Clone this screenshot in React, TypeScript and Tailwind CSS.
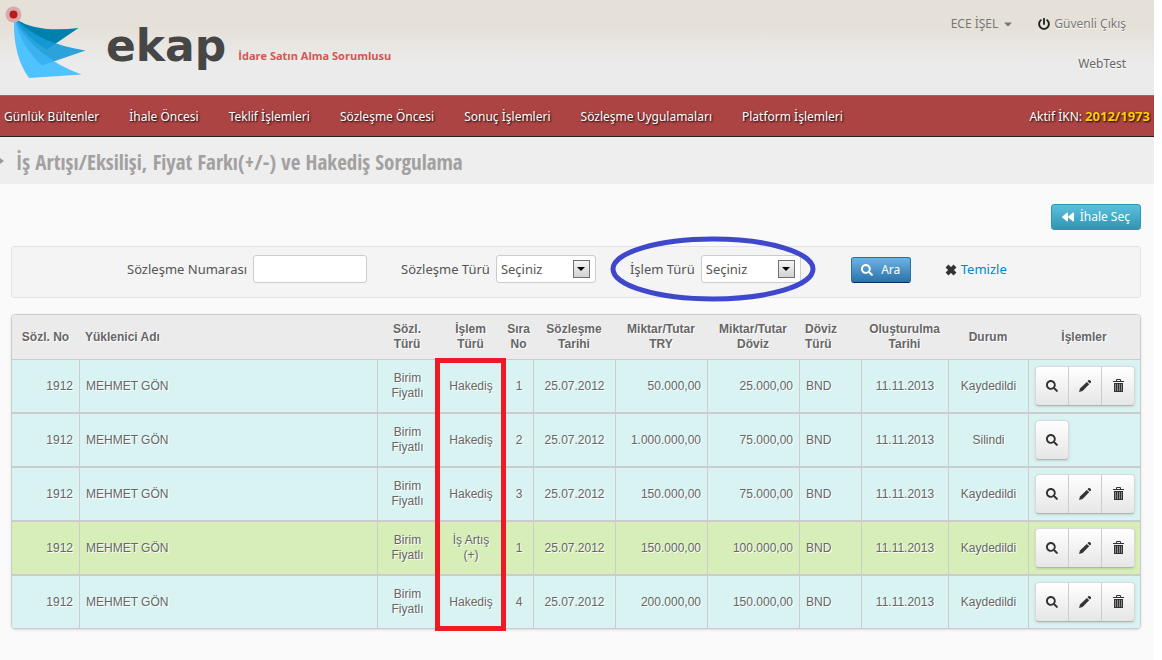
import React from 'react'
import { FaBackward, FaCaretDown, FaPowerOff, FaSearch } from 'react-icons/fa'

type Row = {
  no: string
  name: string
  kind: string
  op: string
  seq: number
  date: string
  amountTry: string
  amountFx: string
  currency: string
  created: string
  status: string
  highlighted?: boolean
  readOnly?: boolean
}

const base = {
  no: '1912',
  name: 'MEHMET GÖN',
  kind: 'Birim Fiyatlı',
  op: 'Hakediş',
  date: '25.07.2012',
  currency: 'BND',
  created: '11.11.2013',
  status: 'Kaydedildi',
}

const rows: Row[] = [
  { ...base, seq: 1, amountTry: '50.000,00', amountFx: '25.000,00' },
  { ...base, seq: 2, amountTry: '1.000.000,00', amountFx: '75.000,00', status: 'Silindi', readOnly: true },
  { ...base, seq: 3, amountTry: '150.000,00', amountFx: '75.000,00' },
  { ...base, seq: 1, amountTry: '150.000,00', amountFx: '100.000,00', op: 'İş Artış (+)', highlighted: true },
  { ...base, seq: 4, amountTry: '200.000,00', amountFx: '150.000,00' },
]

const menu = [
  'Günlük Bültenler',
  'İhale Öncesi',
  'Teklif İşlemleri',
  'Sözleşme Öncesi',
  'Sonuç İşlemleri',
  'Sözleşme Uygulamaları',
  'Platform İşlemleri',
]

function Logo() {
  return (
    <svg width="90" height="84" viewBox="0 0 90 84" aria-hidden="true">
      <path d="M16 19 Q36 33 78.500 28 L47 49.500 Q26 38 16 19Z" fill="#0080ad" />
      <path d="M16 19 Q38 43 85.500 50.500 L42 65.500 Q20 48 15 20Z" fill="#169ad8" fillOpacity="0.9" />
      <path d="M14 20 Q34 57 81.500 74.500 L29 78 Q13 56 14 20Z" fill="#4fc3ff" />
      <path d="M15 20 Q28 45 54 61.500 L42 65.500 Q22 48 15 20Z" fill="#3ab2f2" />
      <circle cx="13.500" cy="14.500" r="8" fill="#dba9a9" />
      <circle cx="13.500" cy="14.500" r="4" fill="#b81c22" />
    </svg>
  )
}

function CrossIcon() {
  return (
    <svg width="12" height="12" viewBox="0 0 12 12" stroke="#333" strokeWidth="4" aria-hidden="true">
      <path d="M2 2 L10 10 M10 2 L2 10" />
    </svg>
  )
}

function PencilIcon() {
  return (
    <svg width="14" height="14" viewBox="0 0 14 14" fill="#333" aria-hidden="true">
      <path d="M1 13 L2 9.500 L8.800 2.900 L11.200 5.300 L4.500 12Z" />
      <path d="M9.500 2.200 L10.600 1.100 Q11.300 .6 12 1.300 L12.800 2.100 Q13.400 2.800 12.900 3.500 L11.900 4.600Z" />
    </svg>
  )
}

function TrashIcon() {
  return (
    <svg width="11" height="14" viewBox="0 0 11 14" fill="none" stroke="#333" aria-hidden="true">
      <path d="M3.500 2 V.5 H7.500 V2 M0 2.500 H11" />
      <path d="M1 4 H10 V13 H1Z" fill="#333" stroke="none" />
      <path d="M2.500 5 V12 M4.500 5 V12 M6.500 5 V12 M8.500 5 V12" stroke="#8a8a8a" />
    </svg>
  )
}

function SelectField({ id, label }: { id: string; label: string }) {
  return (
    <>
      <label htmlFor={id} className="mr-1.5 pt-0.5 whitespace-nowrap">{label}</label>
      <div className="relative">
        <select
          id={id}
          className="block h-7 w-[100px] appearance-none rounded-[3px] border border-[#ccc] bg-white pt-0.5 pl-1 text-[13px] text-[#555] outline-none"
        >
          <option>Seçiniz</option>
        </select>
        <span className="pointer-events-none absolute top-[5px] right-1.5 flex h-[18px] w-[17px] items-center justify-center border border-[#707070] bg-gradient-to-b from-[#f5f5f5] to-[#d2d2d2]">
          <svg width="8" height="4" viewBox="0 0 8 4" aria-hidden="true">
            <path d="M0 0 H8 L4 4Z" fill="#000" />
          </svg>
        </span>
      </div>
    </>
  )
}

function Actions({ readOnly }: { readOnly?: boolean }) {
  const button = 'flex h-full w-[33px] items-center justify-center border-r border-[#ccc] last:w-8 last:border-r-0 cursor-pointer'
  return (
    <div className="inline-flex h-10 overflow-hidden rounded border border-[#d9d9d9] border-b-[#b3b3b3] bg-gradient-to-b from-white to-[#e6e6e6] align-top shadow-sm">
      <button type="button" aria-label="Görüntüle" className={button}>
        <FaSearch className="h-3 w-3 text-[#333]" />
      </button>
      {!readOnly && (
        <>
          <button type="button" aria-label="Düzenle" className={button}>
            <PencilIcon />
          </button>
          <button type="button" aria-label="Sil" className={button}>
            <TrashIcon />
          </button>
        </>
      )}
    </div>
  )
}

function ContractTable() {
  const th = 'px-1.5 font-bold'
  const td = 'border-l border-[#ccc] px-1.5 py-1.5'
  return (
    <div className="relative mt-4">
      <div className="overflow-hidden rounded border border-[#ccc] shadow-sm">
        <table className="w-full table-fixed border-separate border-spacing-0 text-center font-['Liberation_Sans',Arial,sans-serif] text-xs leading-[15px] text-[#666] [text-shadow:1px_1px_0_#fff]">
          <colgroup>
            <col className="w-[67px]" />
            <col />
            <col className="w-[60px]" />
            <col className="w-[67px]" />
            <col className="w-[29px]" />
            <col className="w-[82px]" />
            <col className="w-[92px]" />
            <col className="w-[92px]" />
            <col className="w-[62px]" />
            <col className="w-[87px]" />
            <col className="w-[80px]" />
            <col className="w-[112px]" />
          </colgroup>
          <thead>
            <tr className="h-[45px] bg-[#ebebeb] [&>th]:border-b [&>th]:border-[#ccc]">
              <th className="font-bold">Sözl. No</th>
              <th className={`${th} text-left`}>Yüklenici Adı</th>
              <th className={th}>Sözl. Türü</th>
              <th className={th}>İşlem Türü</th>
              <th className="font-bold">Sıra No</th>
              <th className={th}>Sözleşme Tarihi</th>
              <th className={th}>Miktar/Tutar TRY</th>
              <th className={th}>Miktar/Tutar Döviz</th>
              <th className={`${th} text-left`}>Döviz Türü</th>
              <th className="font-bold">Oluşturulma Tarihi</th>
              <th className={th}>Durum</th>
              <th className={th}>İşlemler</th>
            </tr>
          </thead>
          <tbody>
            {rows.map((row, i) => (
              <tr
                key={i}
                className={`${row.highlighted ? 'bg-[#d7eeb8]' : 'bg-[#d9f3f2]'} [&:not(:last-child)>td]:border-b-2`}
              >
                <td className="border-[#ccc] px-1.5 text-right">{row.no}</td>
                <td className={`${td} text-left`}>{row.name}</td>
                <td className={td}>{row.kind}</td>
                <td className={td}>{row.op}</td>
                <td className="border-l border-[#ccc]">{row.seq}</td>
                <td className={td}>{row.date}</td>
                <td className={`${td} text-right`}>{row.amountTry}</td>
                <td className={`${td} text-right`}>{row.amountFx}</td>
                <td className={`${td} text-left`}>{row.currency}</td>
                <td className={td}>{row.created}</td>
                <td className={td}>{row.status}</td>
                <td className={`${td} text-left`}>
                  <Actions readOnly={row.readOnly} />
                </td>
              </tr>
            ))}
          </tbody>
        </table>
      </div>
      {/* marks the transaction type column */}
      <div className="pointer-events-none absolute top-11 right-[635px] -bottom-0.5 w-[71px] border-5 border-[#ed1c24]" />
    </div>
  )
}

export default function App() {
  return (
    <div className="min-h-screen bg-white pr-2 font-['Noto_Sans','Open_Sans',sans-serif] text-[13px] text-[#555]">
      <div className="min-h-screen bg-[#fafafa]">
        <header className="flex h-[95px] items-start bg-gradient-to-b from-[#e6e1d8] from-30% to-[#ebebeb] to-65%">
          <Logo />
          <div className="ml-4 pt-5 font-['DejaVu_Sans'] text-[44px] leading-[52px] font-bold text-[#464646]">ekap</div>
          <p className="mt-[47px] ml-3 font-['Open_Sans'] text-[11px] leading-[18px] font-bold text-[#d9534f]">İdare Satın Alma Sorumlusu</p>
          <div className="ml-auto pt-3.5 pr-7 text-right text-xs leading-5 text-[#777] [text-shadow:0_1px_0_#fff]">
            <div className="flex items-center gap-6">
              <button type="button" className="flex items-center gap-1 cursor-pointer">
                ECE İŞEL <FaCaretDown className="h-3 w-3" />
              </button>
              <a href="#" className="flex items-center gap-1">
                <FaPowerOff className="h-3 w-3 text-[#222]" />
                Güvenli Çıkış
              </a>
            </div>
            <div className="mt-5 text-[#666]">WebTest</div>
          </div>
        </header>

        <nav className="flex h-[42px] items-center gap-[30px] border-t border-b border-t-[#777] border-b-[#222] bg-[#ad4444] px-1 pt-0.5 text-xs whitespace-nowrap text-white [text-shadow:1px_1px_2px_#000]">
          {menu.map((item) => (
            <a key={item} href="#">{item}</a>
          ))}
          <div className="ml-auto">
            Aktif İKN: <b className="text-[13px] text-[#fc0]">2012/1973</b>
          </div>
        </nav>

        <div className="flex h-[47px] items-center bg-[#eee]">
          <svg width="4" height="6" viewBox="0 0 4 6" aria-hidden="true">
            <path d="M0 0 L4 3 L0 6Z" fill="#999" />
          </svg>
          <h1 className="ml-3 pt-1 font-['Open_Sans_Condensed',Roboto,sans-serif] text-[21px] text-[#a3a1a0]">
            İş Artışı/Eksilişi, Fiyat Farkı(+/-) ve Hakediş Sorgulama
          </h1>
        </div>

        <main className="pt-5 pr-[13px] pl-[11px]">
          <div className="flex justify-end">
            <button
              type="button"
              className="flex h-[26px] items-center gap-1.5 rounded-[3px] border border-[#2f96b4] bg-gradient-to-b from-[#5bc0de] to-[#2f96b4] px-2.5 text-xs text-white cursor-pointer"
            >
              <FaBackward className="h-3 w-3" />
              İhale Seç
            </button>
          </div>

          <form className="mt-4 flex h-[52px] items-start rounded-[3px] border border-[#e3e3e3] bg-[#f4f4f4] pt-2 pl-[115px]">
            <div className="flex items-center">
              <label htmlFor="contractNo" className="mr-1.5 pt-0.5 whitespace-nowrap">Sözleşme Numarası</label>
              <input id="contractNo" type="text" className="h-7 w-[114px] rounded-[3px] border border-[#ccc] bg-white px-1.5 outline-none" />
            </div>
            <div className="ml-[34px] flex items-center">
              <SelectField id="contractType" label="Sözleşme Türü" />
            </div>
            <div className="relative ml-[34px] flex items-center">
              <SelectField id="operationType" label="İşlem Türü" />
              <svg
                className="pointer-events-none absolute -top-5 -right-4 overflow-visible"
                width="206"
                height="66"
                viewBox="0 0 206 66"
                aria-hidden="true"
              >
                <ellipse cx="102" cy="34" rx="100" ry="30" fill="none" stroke="#3f48cc" strokeWidth="5" />
              </svg>
            </div>
            <button
              type="submit"
              className="mt-0.5 ml-[50px] flex h-[26px] w-[60px] items-center justify-center gap-2 rounded-[3px] border border-[#2a6fa8] border-b-[#0a2c6b] bg-gradient-to-b from-[#6db3e2] to-[#2a72ab] text-xs text-white cursor-pointer"
            >
              <FaSearch className="h-3 w-3" />
              Ara
            </button>
            <button type="reset" className="mt-0.5 ml-[34px] flex h-[26px] items-center gap-1 text-[13px] text-[#08c] cursor-pointer">
              <CrossIcon />
              Temizle
            </button>
          </form>

          <ContractTable />
        </main>
      </div>
    </div>
  )
}
